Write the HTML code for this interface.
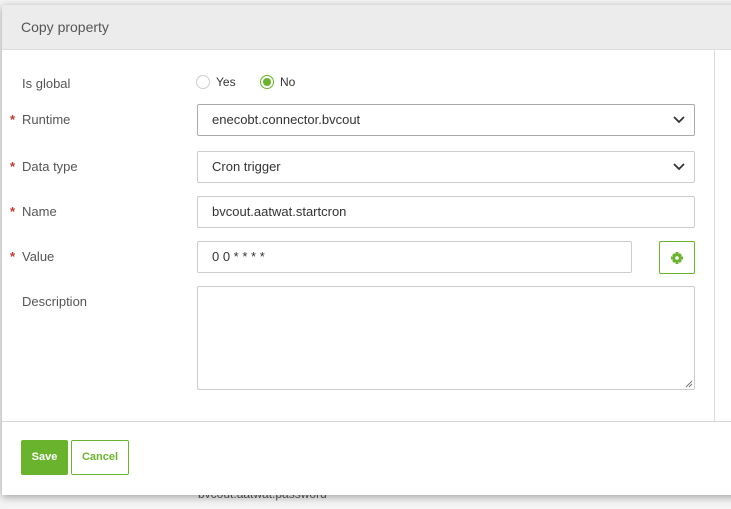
<!DOCTYPE html>
<html><head><style>
body{margin:0;width:731px;height:509px;background:#f4f4f4;font-family:"Liberation Sans",sans-serif;position:relative;overflow:hidden;font-size:13px;color:#333}
.bg{position:absolute;left:198px;top:487px;color:#555;font-size:12px}
.dlg{position:absolute;left:2px;top:5px;width:740px;height:490px;background:#fff;box-shadow:0 2px 8px rgba(0,0,0,.35)}
.hd{position:absolute;left:0;top:0;right:0;height:44px;background:#ececec;border-bottom:1px solid #ddd}
.hd span{position:absolute;left:19px;top:14px;font-size:14px;color:#555}
.vl{position:absolute;left:712px;top:45px;width:1px;height:371px;background:#ddd}
.ft{position:absolute;left:0;right:0;top:416px;border-top:1px solid #d6d6d6}
.lb{position:absolute;left:20px;font-size:13px;color:#555}
.req::before{content:"*";color:#c0392b;position:absolute;left:-12px;top:0;font-weight:bold}
.in{position:absolute;left:195px;width:496px;height:30px;border:1px solid #ccc;border-radius:2px;box-sizing:content-box;font-size:13px;color:#333;line-height:30px}
.in span{margin-left:14px}
.sel{border-color:#aaa}
.chev{position:absolute;right:8px;top:7px}
.btn{position:absolute;top:435px;height:35px;line-height:35px;font-size:11px;font-weight:bold;text-align:center;box-sizing:border-box}
.rad{position:absolute;top:70px;width:14px;height:14px;border:1px solid #ccc;border-radius:50%;box-sizing:border-box}
</style></head><body>
<div class="bg">bvcout.aatwat.password</div>
<div class="dlg">
<div class="hd"><span>Copy property</span></div>
<div class="vl"></div>
<div class="lb" style="top:71px">Is global</div>
<div class="rad" style="left:194px"></div><div style="position:absolute;left:214px;top:70px;font-size:12px">Yes</div>
<div class="rad" style="left:258px;border:1px solid #6ab42d;background:#fff"><div style="position:absolute;left:2px;top:2px;width:8px;height:8px;border-radius:50%;background:#6ab42d"></div></div><div style="position:absolute;left:278px;top:70px;font-size:12px">No</div>
<div class="lb req" style="top:107px">Runtime</div>
<div class="in sel" style="top:99px"><span>enecobt.connector.bvcout</span><svg class="chev" width="14" height="14" viewBox="0 0 14 14"><path d="M2 5l5 5 5-5" fill="none" stroke="#333" stroke-width="1.8"/></svg></div>
<div class="lb req" style="top:154px">Data type</div>
<div class="in" style="top:146px"><span>Cron trigger</span><svg class="chev" width="14" height="14" viewBox="0 0 14 14"><path d="M2 5l5 5 5-5" fill="none" stroke="#333" stroke-width="1.8"/></svg></div>
<div class="lb req" style="top:199px">Name</div>
<div class="in" style="top:191px"><span>bvcout.aatwat.startcron</span></div>
<div class="lb req" style="top:244px">Value</div>
<div class="in" style="top:236px;width:433px"><span>0 0 * * * *</span></div>
<div style="position:absolute;left:657px;top:236px;width:36px;height:33px;border:1px solid #6ab42d;border-radius:2px;box-sizing:border-box"><svg style="position:absolute;left:11px;top:10px" width="12" height="12" viewBox="0 0 12 12"><g fill="#6ab42d"><rect x="4.5" y="0" width="3" height="12"/><rect x="0" y="4.5" width="12" height="3"/><rect x="4.5" y="0.5" width="3" height="11" transform="rotate(45 6 6)"/><rect x="4.5" y="0.5" width="3" height="11" transform="rotate(-45 6 6)"/><circle cx="6" cy="6" r="4.3"/></g><circle cx="6" cy="6" r="1.8" fill="#fff"/></svg></div>
<div class="lb" style="top:289px">Description</div>
<div class="in" style="top:281px;height:102px"><svg style="position:absolute;right:1px;bottom:1px" width="8" height="8"><path d="M1 7L7 1M4 7L7 4" stroke="#777"/></svg></div>
<div class="ft"></div>
<div class="btn" style="left:19px;width:47px;background:#6ab42d;color:#fff;border-radius:2px">Save</div>
<div class="btn" style="left:69px;width:58px;border:1px solid #6ab42d;color:#6ab42d;border-radius:2px;background:#fff;line-height:33px">Cancel</div>
</div>
</body></html>
